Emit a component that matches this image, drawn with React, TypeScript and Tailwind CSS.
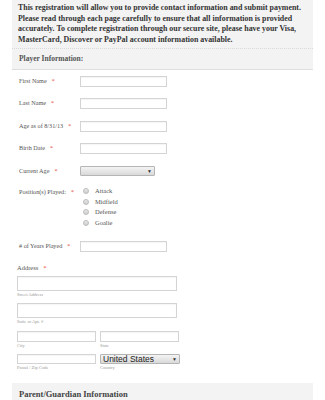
import React from "react";

const serif = { fontFamily: '"Liberation Serif", "Times New Roman", serif' };

function Req() {
  return <span className="text-[#e74c3c] ml-[5px]">*</span>;
}

function TextInput({ w = "w-[87px]", h = "h-[11px]" }: { w?: string; h?: string }) {
  return <div className={`${w} ${h} border border-[#d4d4d4] bg-white shadow-[inset_0_1px_1px_rgba(0,0,0,0.04)]`} />;
}

function Row({ label, mt, children }: { label: string; mt: string; children: React.ReactNode }) {
  return (
    <div className={`flex items-center ${mt}`}>
      <div className="w-[68px] pl-[7px] text-[6.2px] text-[#555] whitespace-nowrap leading-none">
        {label}
        <Req />
      </div>
      {children}
    </div>
  );
}

function Select({ w, children }: { w: string; children?: React.ReactNode }) {
  return (
    <div
      className={`${w} h-[10px] border border-[#b5b5b5] rounded-[1px] bg-gradient-to-b from-[#f4f4f4] to-[#d9d9d9] flex items-center justify-between px-[2px]`}
    >
      <span
        className="text-[8.5px] leading-none text-[#222]"
        style={{ fontFamily: '"Liberation Sans", Arial, sans-serif' }}
      >
        {children}
      </span>
      <span className="text-[5px] leading-none text-[#333]">▼</span>
    </div>
  );
}

function Radio({ label, mt }: { label: string; mt: string }) {
  return (
    <div className={`flex items-center ${mt}`}>
      <div className="w-[6px] h-[6px] rounded-full border border-[#bbb] bg-gradient-to-b from-[#e8e8e8] to-[#cfcfcf] ml-[3px]" />
      <span className="ml-[6px] text-[6.5px] leading-none text-[#555]">{label}</span>
    </div>
  );
}

function Sub({ children }: { children: React.ReactNode }) {
  return <div className="text-[4.5px] leading-none text-[#999] mt-[2px]">{children}</div>;
}

export default function App() {
  return (
    <div className="w-[325px] h-[400px] overflow-hidden bg-white" style={serif}>
      <div className="mx-[12px]">
        <div className="bg-[#f3f3f3]">
          <div className="px-[6px] pt-[3px] pb-[3px] text-[7.9px] leading-[10.5px] font-bold text-[#333] border-b border-dotted border-[#d8d8d8]">
            This registration will allow you to provide contact information and submit payment. Please read through
            each page carefully to ensure that all information is provided accurately. To complete registration through
            our secure site, please have your Visa, MasterCard, Discover or PayPal account information available.
          </div>
          <div className="h-[21px] flex items-center px-[7px] text-[7.5px] font-bold text-[#555] border-b border-[#dedede]">
            Player Information:
          </div>
        </div>

        <div className="pl-0">
          <Row label="First Name" mt="mt-[6px]">
            <TextInput />
          </Row>
          <Row label="Last Name" mt="mt-[11px]">
            <TextInput />
          </Row>
          <Row label="Age as of 8/31/13" mt="mt-[12px]">
            <TextInput />
          </Row>
          <Row label="Birth Date" mt="mt-[11px]">
            <TextInput />
          </Row>
          <Row label="Current Age" mt="mt-[12px]">
            <Select w="w-[75px]" />
          </Row>

          <div className="flex mt-[12px]">
            <div className="w-[68px] pl-[7px] text-[6.2px] text-[#555] whitespace-nowrap leading-none mt-[1px]">
              Position(s) Played:
              <Req />
            </div>
            <div className="flex flex-col">
              <Radio label="Attack" mt="mt-[0px]" />
              <Radio label="Midfield" mt="mt-[4px]" />
              <Radio label="Defense" mt="mt-[4px]" />
              <Radio label="Goalie" mt="mt-[4px]" />
            </div>
          </div>

          <Row label="# of Years Played" mt="mt-[15px]">
            <TextInput />
          </Row>

          <div className="mt-[13px] pl-[5px] text-[6.5px] leading-none text-[#555]">
            Address
            <Req />
          </div>
          <div className="pl-[5px] mt-[4px]">
            <TextInput w="w-[160px]" h="h-[15px]" />
            <Sub>Street Address</Sub>
          </div>
          <div className="pl-[5px] mt-[6px]">
            <TextInput w="w-[160px]" h="h-[15px]" />
            <Sub>Suite or Apt. #</Sub>
          </div>
          <div className="pl-[5px] mt-[6px] flex gap-[4px]">
            <div>
              <TextInput w="w-[79px]" h="h-[11px]" />
              <Sub>City</Sub>
            </div>
            <div>
              <TextInput w="w-[79px]" h="h-[11px]" />
              <Sub>State</Sub>
            </div>
          </div>
          <div className="pl-[5px] mt-[6px] flex gap-[4px]">
            <div>
              <TextInput w="w-[79px]" h="h-[10px]" />
              <Sub>Postal / Zip Code</Sub>
            </div>
            <div>
              <Select w="w-[80px]">United States</Select>
              <Sub>Country</Sub>
            </div>
          </div>
        </div>

        <div className="mt-[12px] bg-[#f3f3f3] h-[30px] px-[7px] pt-[7px] text-[8.5px] font-bold text-[#444] leading-none">
          Parent/Guardian Information
        </div>
      </div>
    </div>
  );
}
